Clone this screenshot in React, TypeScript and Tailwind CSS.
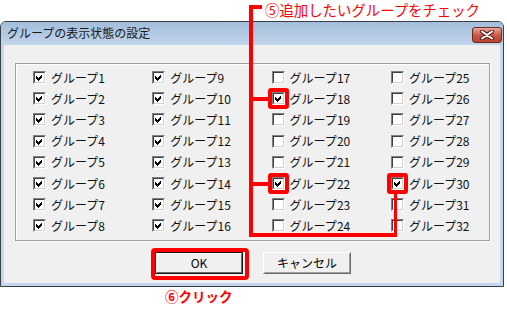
import React from "react";

const CHECKED = new Set([
  1, 2, 3, 4, 5, 6, 7, 8, 9, 10, 11, 12, 13, 14, 15, 16, 18, 22, 30,
]);
const HIGHLIGHT = new Set([18, 22, 30]);

function CheckBox({ checked, highlight }: { checked: boolean; highlight: boolean }) {
  return (
    <div className="relative w-[13px] h-[13px] shrink-0">
      <div className="w-[13px] h-[13px] border border-t-[#808080] border-l-[#808080] border-b-white border-r-white">
        <div className="w-[11px] h-[11px] border border-t-[#404040] border-l-[#404040] border-b-[#d4d0c8] border-r-[#d4d0c8] bg-white">
          {checked && (
            <svg width="9" height="9" viewBox="0 0 9 9" className="block" shapeRendering="crispEdges">
              <path d="M1 3h1v1h1v1h1v-1h1v-1h1v-1h1v3h-1v1h-1v1h-1v1h-1v-1h-1v-1h-1z" fill="#000" />
            </svg>
          )}
        </div>
      </div>
      {highlight && (
        <div className="absolute left-[-4px] top-[-4px] w-[21px] h-[21px] border-[4px] border-[#ff0000] rounded-[3px]" />
      )}
    </div>
  );
}

export default function App() {
  const items = Array.from({ length: 32 }, (_, i) => i + 1);
  return (
    <div className="relative w-[507px] h-[310px] bg-white overflow-hidden font-['Noto_Sans_CJK_JP',sans-serif] text-black">
      {/* dialog window */}
      <div className="mt-[21px] w-[504px] h-[266px] border border-[#3a3f46] rounded-t-[6px] bg-[#c4d7ec] flex flex-col">
        {/* title bar */}
        <div className="h-[23px] shrink-0 rounded-t-[5px] bg-gradient-to-b from-[#a3bddb] to-[#c2d6eb] flex items-start justify-between">
          <div className="pl-[6px] pt-[4px] text-[12px] leading-[14px] text-[#1a1a1a] tracking-[0px]">
            グループの表示状態の設定
          </div>
          <div className="mt-[5px] mr-[1px] w-[30px] h-[16px] rounded-[3px] border border-[#6b2a22] bg-gradient-to-b from-[#e7a89d] via-[#c9594a] to-[#b8412f] flex items-center justify-center">
            <svg width="16" height="10" viewBox="0 0 16 10">
              <path d="M3 1.5 L13 8.5 M13 1.5 L3 8.5" stroke="#5b1e16" strokeWidth="4" strokeLinecap="round" />
              <path d="M3 1.5 L13 8.5 M13 1.5 L3 8.5" stroke="#ffffff" strokeWidth="2" strokeLinecap="round" />
            </svg>
          </div>
        </div>
        {/* client area frame */}
        <div className="flex-1 px-[3px] pb-[3px]">
          <div className="h-full bg-[#f0f0f0] flex flex-col pt-[18px]">
            <div className="ml-[11px] w-[475px] h-[178px] border border-[#a0a0a0] shadow-[inset_1px_1px_0_#ffffff,1px_1px_0_#ffffff] pl-[17px] pt-[3px]">
              <div className="grid grid-flow-col grid-cols-[repeat(4,119.3px)] grid-rows-[repeat(8,21.2px)]">
                {items.map((n) => (
                  <div key={n} className="flex items-center gap-[4px]">
                    <CheckBox checked={CHECKED.has(n)} highlight={HIGHLIGHT.has(n)} />
                    <span className="text-[12px] leading-[14px] pl-[1px] text-[#111]">グループ{n}</span>
                  </div>
                ))}
              </div>
            </div>
            <div className="mt-[11px] flex justify-center gap-[20px] pl-[2px]">
              <div className="relative w-[88px] h-[22px] border border-[#1a1a1a] bg-[#f0f0f0]">
                <div className="w-full h-full border border-t-white border-l-white border-b-[#696969] border-r-[#696969] flex items-center justify-center">
                  <span className="text-[12px] leading-[14px]">OK</span>
                </div>
                <div className="absolute left-[-5px] top-[-5px] w-[98px] h-[32px] border-[4px] border-[#ff0000] rounded-[4px]" />
              </div>
              <div className="w-[88px] h-[22px] border border-t-white border-l-white border-b-[#696969] border-r-[#696969] bg-[#f0f0f0]">
                <div className="w-full h-full border border-t-[#f0f0f0] border-l-[#f0f0f0] border-b-[#a0a0a0] border-r-[#a0a0a0] flex items-center justify-center">
                  <span className="text-[12px] leading-[14px]">キャンセル</span>
                </div>
              </div>
            </div>
          </div>
        </div>
      </div>

      {/* annotation lines */}
      <div className="absolute left-[249px] top-[5px] w-[4px] h-[232px] bg-[#ff0000]" />
      <div className="absolute left-[249px] top-[5px] w-[13px] h-[4px] bg-[#ff0000]" />
      <div className="absolute left-[249px] top-[97px] w-[19px] h-[4px] bg-[#ff0000]" />
      <div className="absolute left-[249px] top-[182px] w-[19px] h-[4px] bg-[#ff0000]" />
      <div className="absolute left-[249px] top-[233px] w-[148px] h-[4px] bg-[#ff0000]" />
      <div className="absolute left-[394px] top-[192px] w-[3px] h-[45px] bg-[#ff0000]" />

      <div className="absolute left-[265px] top-[0px] text-[14.4px] leading-[19px] text-[#ff0000] whitespace-nowrap">
        ⑤追加したいグループをチェック
      </div>
      <div className="absolute left-[165px] top-[287px] text-[13.5px] leading-[19px] font-bold text-[#ff0000] whitespace-nowrap">
        ⑥クリック
      </div>
    </div>
  );
}
